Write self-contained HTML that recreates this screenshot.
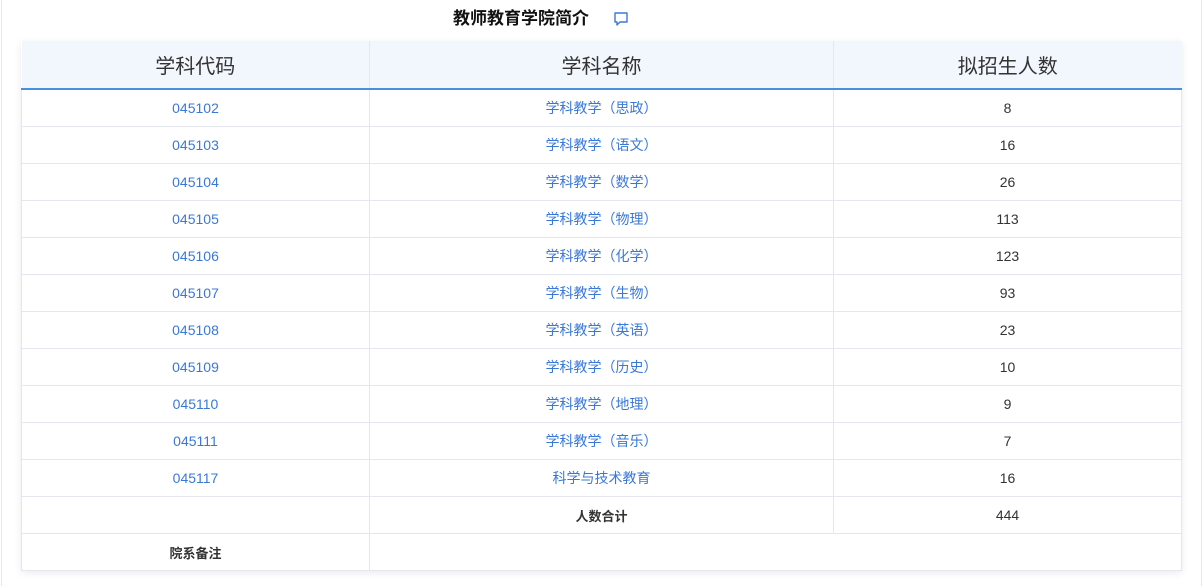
<!DOCTYPE html>
<html><head><meta charset="utf-8"><style>
body{margin:0;width:1203px;height:586px;background:#fff;font-family:"Liberation Sans","Noto Sans CJK SC",sans-serif;position:relative;overflow:hidden}
.lb{position:absolute;top:0;bottom:0;width:1px;background:#e6e8eb}
.title{position:absolute;top:8px;left:453px;font-size:17px;font-weight:bold;color:#111;line-height:22px;white-space:nowrap}
.icon{position:absolute;left:613px;top:11px}
table{position:absolute;left:21px;top:41px;width:1161px;border-collapse:collapse;box-shadow:0 2px 8px rgba(0,0,0,0.08);table-layout:fixed}
th{height:47px;background:#f2f6fd;font-weight:normal;font-size:20px;color:#333;border-right:1px solid #e4e7ed;border-bottom:2px solid #4a8fdc;padding:0}
td{height:36px;border:1px solid #e4e7ed;text-align:center;font-size:14px;color:#333;padding:0}
td.b{color:#3a78d8}
td.s{font-weight:bold;font-size:13px}
</style></head><body>
<div class="lb" style="left:1px"></div><div class="lb" style="left:1201px"></div>
<div class="title">教师教育学院简介</div>
<svg class="icon" width="16" height="16" viewBox="0 0 16 16"><path d="M2 2h12v9H7l-3 3v-3H2z" fill="none" stroke="#3a78d8" stroke-width="1.4" stroke-linejoin="round"/></svg>
<table>
<colgroup><col style="width:348px"><col style="width:464px"><col></colgroup>
<tr><th>学科代码</th><th>学科名称</th><th style="border-right:none">拟招生人数</th></tr>
<tr><td class="b">045102</td><td class="b">学科教学（思政）</td><td>8</td></tr>
<tr><td class="b">045103</td><td class="b">学科教学（语文）</td><td>16</td></tr>
<tr><td class="b">045104</td><td class="b">学科教学（数学）</td><td>26</td></tr>
<tr><td class="b">045105</td><td class="b">学科教学（物理）</td><td>113</td></tr>
<tr><td class="b">045106</td><td class="b">学科教学（化学）</td><td>123</td></tr>
<tr><td class="b">045107</td><td class="b">学科教学（生物）</td><td>93</td></tr>
<tr><td class="b">045108</td><td class="b">学科教学（英语）</td><td>23</td></tr>
<tr><td class="b">045109</td><td class="b">学科教学（历史）</td><td>10</td></tr>
<tr><td class="b">045110</td><td class="b">学科教学（地理）</td><td>9</td></tr>
<tr><td class="b">045111</td><td class="b">学科教学（音乐）</td><td>7</td></tr>
<tr><td class="b">045117</td><td class="b">科学与技术教育</td><td>16</td></tr>
<tr><td></td><td class="s">人数合计</td><td>444</td></tr>
<tr><td class="s">院系备注</td><td colspan="2"></td></tr>
</table>
</body></html>
